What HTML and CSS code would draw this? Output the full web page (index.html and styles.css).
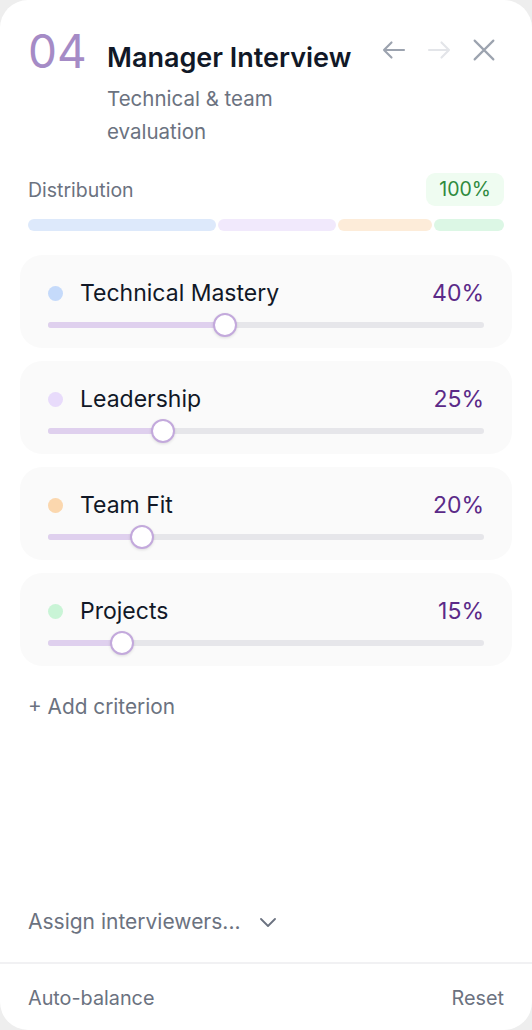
FILE: index.html
```html
<!DOCTYPE html>
<html>
<head>
<meta charset="utf-8">
<link rel="stylesheet" href="styles.css">
</head>
<body>
<div class="panel">
  <div class="header">
    <div class="num">04</div>
    <div class="titles">
      <div class="title">Manager Interview</div>
      <div class="subtitle">Technical &amp; team<br>evaluation</div>
    </div>
    <div class="actions">
      <svg class="ic" width="30" height="30" viewBox="0 0 24 24"><path d="M20 12H4M10 6l-6 6 6 6" fill="none" stroke="#9ca3af" stroke-width="1.7" stroke-linecap="round" stroke-linejoin="round"/></svg>
      <svg class="ic" width="30" height="30" viewBox="0 0 24 24"><path d="M4 12h16M14 6l6 6-6 6" fill="none" stroke="#e3e5e9" stroke-width="1.7" stroke-linecap="round" stroke-linejoin="round"/></svg>
      <svg class="ic" width="30" height="30" viewBox="0 0 24 24"><path d="M4.5 4.5l15 15M19.5 4.5l-15 15" fill="none" stroke="#9ca3af" stroke-width="1.7" stroke-linecap="round"/></svg>
    </div>
  </div>

  <div class="dist">
    <div class="dist-head">
      <span class="dist-label">Distribution</span>
      <span class="badge">100%</span>
    </div>
    <div class="dist-bar">
      <span class="seg s-blue" style="flex:40"></span>
      <span class="seg s-purple" style="flex:25"></span>
      <span class="seg s-orange" style="flex:20"></span>
      <span class="seg s-green" style="flex:15"></span>
    </div>
  </div>

  <div class="list">
    <div class="crit">
      <div class="crit-head"><span class="dot d-blue"></span><span class="name">Technical Mastery</span><span class="pct">40%</span></div>
      <div class="slider"><div class="track"><div class="fill" style="width:calc(12px + 0.40 * (100% - 24px))"></div></div><div class="thumb" style="left:calc(0.40 * (100% - 24px))"></div></div>
    </div>
    <div class="crit">
      <div class="crit-head"><span class="dot d-purple"></span><span class="name">Leadership</span><span class="pct">25%</span></div>
      <div class="slider"><div class="track"><div class="fill" style="width:calc(12px + 0.25 * (100% - 24px))"></div></div><div class="thumb" style="left:calc(0.25 * (100% - 24px))"></div></div>
    </div>
    <div class="crit">
      <div class="crit-head"><span class="dot d-orange"></span><span class="name">Team Fit</span><span class="pct">20%</span></div>
      <div class="slider"><div class="track"><div class="fill" style="width:calc(12px + 0.20 * (100% - 24px))"></div></div><div class="thumb" style="left:calc(0.20 * (100% - 24px))"></div></div>
    </div>
    <div class="crit">
      <div class="crit-head"><span class="dot d-green"></span><span class="name">Projects</span><span class="pct">15%</span></div>
      <div class="slider"><div class="track"><div class="fill" style="width:calc(12px + 0.15 * (100% - 24px))"></div></div><div class="thumb" style="left:calc(0.15 * (100% - 24px))"></div></div>
    </div>
  </div>

  <div class="add">+ Add criterion</div>

  <div class="spacer"></div>

  <div class="assign">
    <span>Assign interviewers...</span>
    <svg width="18" height="10" viewBox="0 0 18 10"><path d="M2 2l7 7 7-7" fill="none" stroke="#6b7280" stroke-width="1.8" stroke-linecap="round" stroke-linejoin="round"/></svg>
  </div>

  <div class="footer">
    <span>Auto-balance</span>
    <span>Reset</span>
  </div>
</div>
</body>
</html>
```

FILE: styles.css
```css
* { box-sizing: border-box; }
html, body { margin: 0; padding: 0; }
body {
  background: #eeeeee;
  font-family: Inter, "Noto Sans", sans-serif;
  width: 532px;
  height: 1030px;
  overflow: hidden;
}
.panel {
  width: 532px;
  height: 1030px;
  background: #ffffff;
  border-radius: 28px;
  display: flex;
  flex-direction: column;
}
.header {
  display: flex;
  align-items: flex-start;
  padding: 27px 28px 0 28px;
}
.num {
  font-size: 46px;
  line-height: 48px;
  font-weight: 400;
  color: #a58bc6;
  width: 79px;
}
.titles { flex: 1; padding-top: 15px; }
.title {
  font-size: 27px;
  line-height: 32px;
  font-weight: 600;
  color: #111827;
}
.subtitle {
  margin-top: 8px;
  font-size: 20.5px;
  line-height: 33px;
  color: #6b7280;
}
.actions {
  display: flex;
  gap: 15px;
  padding-top: 8px;
  margin-right: 5px;
}
.ic { display: block; }
.dist { padding: 25px 28px 0 28px; }
.dist-head {
  display: flex;
  justify-content: space-between;
  align-items: center;
}
.dist-label { font-size: 19.5px; color: #6b7280; }
.badge {
  background: #effcf1;
  color: #2f8a3e;
  font-size: 19.5px;
  padding: 5px 13px;
  border-radius: 9px;
  line-height: 23px;
}
.dist-bar {
  display: flex;
  gap: 2px;
  height: 12px;
  margin-top: 13px;
}
.seg { border-radius: 6px; }
.s-blue { background: #dde9fb; }
.s-purple { background: #f1e9fc; }
.s-orange { background: #fdecd9; }
.s-green { background: #dcf7e5; }
.list {
  display: flex;
  flex-direction: column;
  gap: 13px;
  padding: 24px 20px 0 20px;
}
.crit {
  background: #fafafa;
  border-radius: 22px;
  height: 93px;
  padding: 23px 28px 0 28px;
}
.crit-head {
  display: flex;
  align-items: center;
  height: 30px;
}
.dot { width: 15px; height: 15px; border-radius: 50%; margin-right: 17px; }
.d-blue { background: #c5dafa; }
.d-purple { background: #e8dbfb; }
.d-orange { background: #fbd7ae; }
.d-green { background: #c9f4d6; }
.name { flex: 1; font-size: 23px; color: #111827; }
.pct { font-size: 23px; color: #5b2a88; }
.slider {
  position: relative;
  height: 24px;
  margin-top: 5px;
}
.track {
  position: absolute;
  left: 0; right: 0; top: 9px;
  height: 6px;
  border-radius: 3px;
  background: #e6e6ea;
  overflow: hidden;
}
.fill { height: 100%; background: #dfd0ee; }
.thumb {
  position: absolute;
  top: 0;
  width: 24px;
  height: 24px;
  border-radius: 50%;
  background: #ffffff;
  border: 2px solid #c3a9dc;
  box-shadow: 0 1px 3px rgba(0,0,0,0.12);
}
.add {
  padding: 28px 28px 0 28px;
  font-size: 20.8px;
  line-height: 25px;
  color: #6b7280;
}
.spacer { flex: 1; }
.assign {
  display: flex;
  align-items: center;
  gap: 18px;
  padding: 0 28px 28px 28px;
  font-size: 21px;
  line-height: 25px;
  color: #6b7280;
}
.assign svg { display: block; }
.footer {
  border-top: 2px solid #f1f1f3;
  display: flex;
  justify-content: space-between;
  padding: 22px 28px 20px 28px;
  font-size: 19.8px;
  line-height: 24px;
  color: #6b7280;
}
```
